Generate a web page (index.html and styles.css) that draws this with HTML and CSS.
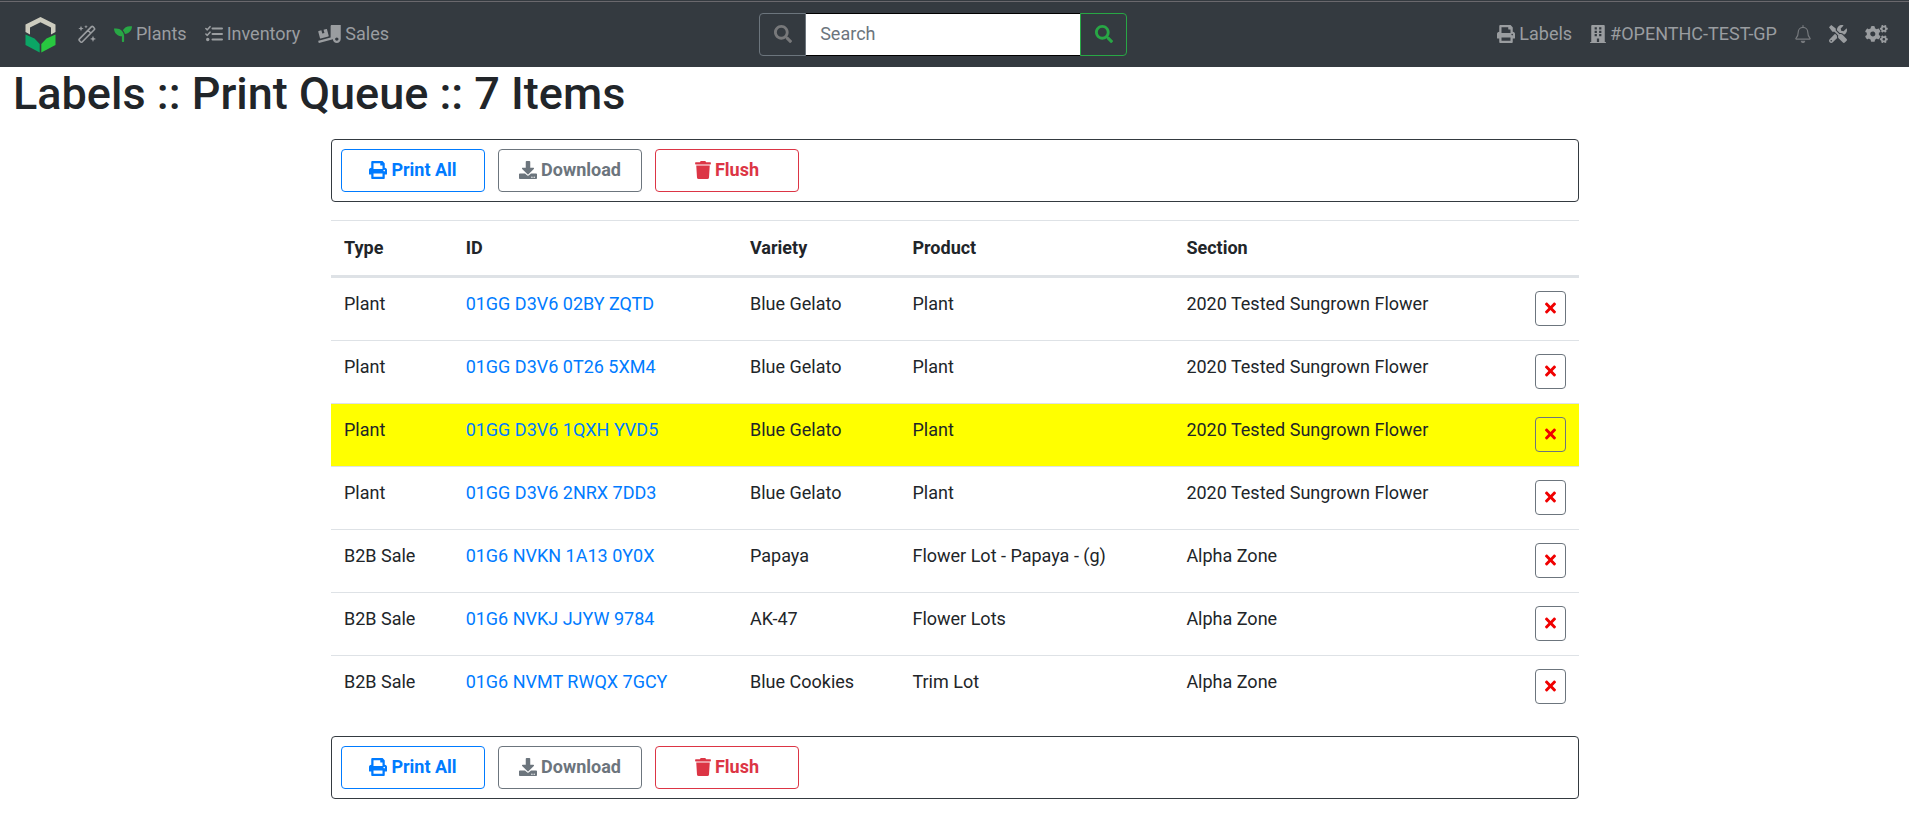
FILE: index.html
```
<!DOCTYPE html>
<html lang="en">
<head>
<meta charset="utf-8">
<meta name="viewport" content="width=device-width, initial-scale=1">
<title>Labels :: Print Queue</title>
<link rel="stylesheet" href="styles.css">
</head>
<body>
<svg class="sprite" aria-hidden="true">
  <symbol id="i-search" viewBox="0 0 512 512"><path d="M505 442.700L405.300 343c-4.500-4.500-10.600-7-17-7H372c27.600-35.300 44-79.700 44-128C416 93.100 322.900 0 208 0S0 93.100 0 208s93.100 208 208 208c48.300 0 92.700-16.400 128-44v16.300c0 6.400 2.500 12.500 7 17l99.700 99.700c9.400 9.400 24.600 9.400 33.900 0l28.300-28.300c9.400-9.400 9.400-24.600.1-34zM208 336c-70.700 0-128-57.200-128-128 0-70.700 57.200-128 128-128 70.700 0 128 57.200 128 128 0 70.700-57.200 128-128 128z"/></symbol>
  <symbol id="i-print" viewBox="0 0 512 512"><path d="M448 192V77.250c0-8.490-3.370-16.620-9.370-22.630L393.370 9.370c-6-6-14.140-9.370-22.630-9.370H96C78.330 0 64 14.330 64 32v160c-35.350 0-64 28.650-64 64v112c0 8.840 7.160 16 16 16h48v96c0 17.670 14.330 32 32 32h320c17.670 0 32-14.330 32-32v-96h48c8.840 0 16-7.160 16-16V256c0-35.350-28.650-64-64-64zm-64 256H128v-96h256v96zm0-224H128V64h192v48c0 8.840 7.160 16 16 16h48v96zm48 72c-13.250 0-24-10.750-24-24 0-13.260 10.750-24 24-24s24 10.740 24 24c0 13.250-10.750 24-24 24z"/></symbol>
  <symbol id="i-download" viewBox="0 0 512 512"><path d="M216 0h80c13.300 0 24 10.700 24 24v168h87.700c17.800 0 26.700 21.500 14.100 34.100L269.700 378.300c-7.500 7.500-19.800 7.500-27.300 0L90.100 226.100c-12.600-12.600-3.700-34.100 14.100-34.100H192V24c0-13.300 10.700-24 24-24zm296 376v112c0 13.300-10.700 24-24 24H24c-13.300 0-24-10.700-24-24V376c0-13.300 10.700-24 24-24h146.700l49 49c20.100 20.100 52.500 20.100 72.600 0l49-49H488c13.300 0 24 10.700 24 24zm-124 88c0-11-9-20-20-20s-20 9-20 20 9 20 20 20 20-9 20-20zm64 0c0-11-9-20-20-20s-20 9-20 20 9 20 20 20 20-9 20-20z"/></symbol>
  <symbol id="i-trash" viewBox="0 0 448 512"><path d="M432 32H312l-9.400-18.700A24 24 0 0 0 281.100 0H166.800a23.720 23.720 0 0 0-21.400 13.300L136 32H16A16 16 0 0 0 0 48v32a16 16 0 0 0 16 16h416a16 16 0 0 0 16-16V48a16 16 0 0 0-16-16zM53.200 467a48 48 0 0 0 47.900 45h245.800a48 48 0 0 0 47.900-45L416 128H32z"/></symbol>
  <symbol id="i-times" viewBox="0 0 352 512"><path d="M242.720 256l100.070-100.070c12.280-12.280 12.280-32.190 0-44.480l-22.240-22.240c-12.280-12.280-32.190-12.280-44.480 0L176 189.280 75.930 89.210c-12.280-12.280-32.190-12.280-44.480 0L9.210 111.450c-12.280 12.280-12.280 32.190 0 44.480L109.280 256 9.210 356.070c-12.280 12.280-12.280 32.190 0 44.480l22.240 22.240c12.280 12.280 32.200 12.280 44.480 0L176 322.720l100.070 100.070c12.280 12.280 32.200 12.280 44.480 0l22.240-22.240c12.280-12.280 12.280-32.190 0-44.480L242.720 256z"/></symbol>
  <symbol id="i-seedling" viewBox="0 0 512 512"><path d="M64 96H0c0 123.700 100.300 224 224 224v144c0 8.800 7.200 16 16 16h32c8.800 0 16-7.200 16-16V320C288 196.300 187.700 96 64 96zm384-64c-84.200 0-157.400 46.500-195.700 115.200 27.700 30.200 48.200 66.900 59 107.600C424 243.100 512 147.900 512 32h-64z"/></symbol>
  <symbol id="i-truck" viewBox="0 0 640 512"><path d="M50.200 375.600c2.300 8.500 11.100 13.600 19.600 11.300l216.400-58c8.500-2.300 13.600-11.100 11.300-19.600l-49.700-185.500c-2.300-8.500-11.100-13.600-19.600-11.300L151 133.300l24.800 92.700-61.800 16.500-24.800-92.700-77.300 20.700C3.400 172.800-1.700 181.600.6 190.100l49.600 185.500zM384 0c-17.700 0-32 14.300-32 32v323.600L5.900 450c-4.300 1.200-6.800 5.600-5.600 9.800l12.600 46.300c1.200 4.300 5.600 6.800 9.800 5.600l393.700-107.400C418.800 464.100 467.600 512 528 512c61.900 0 112-50.100 112-112V0H384zm144 448c-26.500 0-48-21.500-48-48s21.500-48 48-48 48 21.500 48 48-21.500 48-48 48z"/></symbol>
  <symbol id="i-tools" viewBox="0 0 512 512"><path d="M501.100 395.700L384 278.600c-23.100-23.100-57.600-27.600-85.400-13.900L192 158.100V96L64 0 0 64l96 128h62.100l106.600 106.600c-13.600 27.800-9.200 62.300 13.900 85.400l117.100 117.100c14.600 14.600 38.200 14.600 52.700 0l52.700-52.700c14.500-14.600 14.500-38.200 0-52.700zM331.700 225c28.300 0 54.900 11 74.900 31l19.400 19.400c15.800-6.900 30.800-16.500 43.800-29.500 37.100-37.100 49.700-89.300 37.900-136.700-2.200-9-13.500-12.100-20.100-5.500l-74.400 74.400-67.900-11.300L334 98.900l74.400-74.400c6.600-6.600 3.400-17.900-5.700-20.200-47.400-11.700-99.600.9-136.600 37.900-28.500 28.500-41.900 66.100-41.200 103.600l82.100 82.100c8.100-1.900 16.500-2.900 24.700-2.900zm-103.900 82l-56.700-56.700L18.700 402.800c-25 25-25 65.500 0 90.500s65.500 25 90.500 0l123.600-123.600c-7.600-19.900-9.900-41.600-5-62.700zM64 472c-13.200 0-24-10.800-24-24 0-13.300 10.700-24 24-24s24 10.700 24 24c0 13.200-10.700 24-24 24z"/></symbol>
  <symbol id="i-cogs" viewBox="0 0 640 512">
    <path id="small-cog" d="M512.100 191l-8.200 14.300c-3 5.300-9.400 7.500-15.100 5.400-11.800-4.400-22.600-10.700-32.100-18.600-4.600-3.800-5.800-10.500-2.800-15.700l8.200-14.300c-6.900-8-12.300-17.300-15.900-27.400h-16.500c-6 0-11.200-4.300-12.200-10.300-2-12-2.100-24.600 0-37.100 1-6 6.200-10.400 12.200-10.400h16.500c3.600-10.100 9-19.400 15.900-27.400l-8.200-14.300c-3-5.200-1.900-11.900 2.800-15.700 9.500-7.900 20.400-14.200 32.100-18.600 5.700-2.100 12.100.1 15.100 5.400l8.200 14.300c10.500-1.900 21.200-1.900 31.700 0L552 6.300c3-5.300 9.400-7.500 15.100-5.400 11.800 4.400 22.600 10.700 32.100 18.600 4.600 3.800 5.800 10.500 2.800 15.700l-8.200 14.300c6.900 8 12.300 17.300 15.900 27.400h16.500c6 0 11.200 4.300 12.200 10.300 2 12 2.100 24.600 0 37.100-1 6-6.200 10.400-12.200 10.400h-16.500c-3.600 10.100-9 19.400-15.900 27.400l8.200 14.300c3 5.200 1.900 11.900-2.800 15.700-9.500 7.900-20.400 14.200-32.100 18.600-5.700 2.100-12.100-.1-15.100-5.400l-8.200-14.300c-10.400 1.900-21.200 1.900-31.700 0zm-10.500-58.800c38.500 29.600 82.400-14.300 52.800-52.800-38.500-29.700-82.400 14.300-52.800 52.800z"/>
    <use href="#small-cog" y="301"/>
    <path d="M386.300 286.100l33.700 16.800c10.100 5.800 14.500 18.100 10.500 29.100-8.900 24.200-26.400 46.400-42.600 65.800-7.400 8.900-20.200 11.100-30.300 5.300l-29.100-16.800c-16 13.700-34.600 24.600-54.900 31.700v33.600c0 11.600-8.300 21.600-19.700 23.600-24.600 4.200-50.400 4.400-75.900 0-11.500-2-20-11.900-20-23.600V418c-20.300-7.200-38.900-18-54.900-31.700L74 403c-10 5.800-22.900 3.600-30.300-5.300-16.200-19.400-33.300-41.600-42.200-65.700-4-10.900.4-23.200 10.500-29.100l33.300-16.800c-3.900-20.900-3.900-42.400 0-63.400L12 205.800c-10.100-5.800-14.600-18.100-10.500-29 8.900-24.200 26-46.400 42.200-65.800 7.400-8.900 20.200-11.100 30.300-5.300l29.100 16.800c16-13.700 34.600-24.600 54.900-31.700V57.100c0-11.500 8.200-21.500 19.600-23.500 24.600-4.200 50.500-4.400 76-.1 11.500 2 20 11.900 20 23.600v33.600c20.300 7.200 38.900 18 54.900 31.700l29.100-16.800c10-5.800 22.900-3.600 30.300 5.300 16.200 19.400 33.200 41.600 42.100 65.800 4 10.900.1 23.200-10 29.100l-33.700 16.800c3.900 21 3.900 42.500 0 63.500zm-117.600 21.100c59.200-77-28.700-164.900-105.700-105.700-59.200 77 28.700 164.900 105.700 105.700z"/>
  </symbol>
  <symbol id="i-building" viewBox="0 0 448 512"><path fill-rule="evenodd" d="M436 480h-20V24c0-13-11-24-24-24H56C43 0 32 11 32 24v456H12c-7 0-12 5-12 12v20h448v-20c0-7-5-12-12-12zM128 64h64v64h-64zM256 64h64v64h-64zM128 160h64v64h-64zM256 160h64v64h-64zM128 256h64v64h-64zM256 256h64v64h-64zM192 384h64v96h-64z"/></symbol>
  <symbol id="i-bell" viewBox="0 0 448 512"><path fill="none" stroke="currentColor" stroke-width="34" stroke-linejoin="round" stroke-linecap="round" d="M224 20v46M224 68c-80 0-136 62-136 140 0 108-38 138-62 164-10 11-4 28 10 28h376c14 0 20-17 10-28-24-26-62-56-62-164 0-78-56-140-136-140z"/><path d="M160 446h128c0 36-29 66-64 66s-64-30-64-66z"/></symbol>
  <symbol id="i-tasks" viewBox="0 0 18 18"><g fill="none" stroke="currentColor" stroke-width="2" stroke-linecap="round" stroke-linejoin="round"><path d="M7.500 3.500H17M7.500 9H17M7.500 14.500H17"/><path stroke-width="1.600" d="M.9 3.500l1.400 1.300L5 1.700M.9 9l1.400 1.300L5 7.200"/></g><circle cx="2.700" cy="14.500" r="1.700"/></symbol>
  <symbol id="i-wand" viewBox="0 0 18 18"><g fill="none" stroke="currentColor" stroke-width="1.600" stroke-linejoin="round"><path d="M1.500 13.900L13.300 1.900c.6-.6 1.300-.6 1.900 0l1 1.100c.6.6.6 1.200 0 1.800L4.400 16.800c-.6.6-1.300.6-1.900 0l-1-1.100c-.6-.6-.6-1.200 0-1.800zM10 5.300l2.900 2.900"/></g><path d="M3 .8l.8 1.900 1.900.8-1.900.8L3 6.200l-.8-1.900L.3 3.500l1.900-.8zM15 10.800l.9 2.200 2.100.9-2.100.9L15 17l-.9-2.200-2.100-.9 2.100-.9zM8 .1l.6 1.200 1.200.5-1.200.5L8 3.500l-.6-1.200-1.200-.5 1.200-.5z"/></symbol>
</svg>

<nav class="navbar">
  <div class="nav-group">
    <a class="brand" href="#" aria-label="Home">
      <svg class="logo" viewBox="0 0 31 36" aria-hidden="true">
        <path fill="#cdccbf" d="M15.500 0L30.500 7.500V15L26 17.500V10.500L15.500 5.200 5 10.500V17.500L.5 15V7.500z"/>
        <path fill="#0ba565" d="M.5 17.500L9.500 21.500 14.700 27V35.500L.5 28z"/>
        <path fill="#28c840" d="M30.500 17.500L21.500 21.500 16.300 27V35.500L30.500 28z"/>
      </svg>
    </a>
    <a class="nav-link" href="#" aria-label="Wizard"><svg class="icon"><use href="#i-wand"/></svg></a>
    <a class="nav-link" href="#"><svg class="icon icon-green"><use href="#i-seedling"/></svg>Plants</a>
    <a class="nav-link" href="#"><svg class="icon"><use href="#i-tasks"/></svg>Inventory</a>
    <a class="nav-link" href="#"><svg class="icon icon-wide"><use href="#i-truck"/></svg>Sales</a>
  </div>
  <form class="search">
    <button class="search-btn search-mode" type="button" aria-label="Search options"><svg class="icon"><use href="#i-search"/></svg></button>
    <input class="search-input" type="text" placeholder="Search" aria-label="Search">
    <button class="search-btn search-go" type="button" aria-label="Go"><svg class="icon"><use href="#i-search"/></svg></button>
  </form>
  <div class="nav-group">
    <a class="nav-link" href="#"><svg class="icon"><use href="#i-print"/></svg>Labels</a>
    <a class="nav-link" href="#"><svg class="icon icon-narrow"><use href="#i-building"/></svg>#OPENTHC-TEST-GP</a>
    <a class="nav-link nav-dim" href="#" aria-label="Alerts"><svg class="icon icon-narrow"><use href="#i-bell"/></svg></a>
    <a class="nav-link" href="#" aria-label="Tools"><svg class="icon"><use href="#i-tools"/></svg></a>
    <a class="nav-link" href="#" aria-label="Settings"><svg class="icon icon-wide"><use href="#i-cogs"/></svg></a>
  </div>
</nav>

<main class="page">
  <h1 class="title">Labels :: Print Queue :: 7 Items</h1>
  <div class="queue">
    <div class="toolbar">
      <button class="btn btn-primary" type="button"><svg class="icon"><use href="#i-print"/></svg>Print All</button>
      <button class="btn btn-secondary" type="button"><svg class="icon"><use href="#i-download"/></svg>Download</button>
      <button class="btn btn-danger" type="button"><svg class="icon icon-narrow"><use href="#i-trash"/></svg>Flush</button>
    </div>
    <table class="table">
      <thead>
        <tr><th>Type</th><th>ID</th><th>Variety</th><th>Product</th><th>Section</th><th></th></tr>
      </thead>
      <tbody>
        <tr><td>Plant</td><td><a href="#">01GG D3V6 02BY ZQTD</a></td><td>Blue Gelato</td><td>Plant</td><td>2020 Tested Sungrown Flower</td><td class="actions"><button class="remove" type="button" aria-label="Remove"><svg class="icon-x"><use href="#i-times"/></svg></button></td></tr>
        <tr><td>Plant</td><td><a href="#">01GG D3V6 0T26 5XM4</a></td><td>Blue Gelato</td><td>Plant</td><td>2020 Tested Sungrown Flower</td><td class="actions"><button class="remove" type="button" aria-label="Remove"><svg class="icon-x"><use href="#i-times"/></svg></button></td></tr>
        <tr class="marked"><td>Plant</td><td><a href="#">01GG D3V6 1QXH YVD5</a></td><td>Blue Gelato</td><td>Plant</td><td>2020 Tested Sungrown Flower</td><td class="actions"><button class="remove" type="button" aria-label="Remove"><svg class="icon-x"><use href="#i-times"/></svg></button></td></tr>
        <tr><td>Plant</td><td><a href="#">01GG D3V6 2NRX 7DD3</a></td><td>Blue Gelato</td><td>Plant</td><td>2020 Tested Sungrown Flower</td><td class="actions"><button class="remove" type="button" aria-label="Remove"><svg class="icon-x"><use href="#i-times"/></svg></button></td></tr>
        <tr><td>B2B Sale</td><td><a href="#">01G6 NVKN 1A13 0Y0X</a></td><td>Papaya</td><td>Flower Lot - Papaya - (g)</td><td>Alpha Zone</td><td class="actions"><button class="remove" type="button" aria-label="Remove"><svg class="icon-x"><use href="#i-times"/></svg></button></td></tr>
        <tr><td>B2B Sale</td><td><a href="#">01G6 NVKJ JJYW 9784</a></td><td>AK-47</td><td>Flower Lots</td><td>Alpha Zone</td><td class="actions"><button class="remove" type="button" aria-label="Remove"><svg class="icon-x"><use href="#i-times"/></svg></button></td></tr>
        <tr><td>B2B Sale</td><td><a href="#">01G6 NVMT RWQX 7GCY</a></td><td>Blue Cookies</td><td>Trim Lot</td><td>Alpha Zone</td><td class="actions"><button class="remove" type="button" aria-label="Remove"><svg class="icon-x"><use href="#i-times"/></svg></button></td></tr>
      </tbody>
    </table>
    <div class="toolbar">
      <button class="btn btn-primary" type="button"><svg class="icon"><use href="#i-print"/></svg>Print All</button>
      <button class="btn btn-secondary" type="button"><svg class="icon"><use href="#i-download"/></svg>Download</button>
      <button class="btn btn-danger" type="button"><svg class="icon icon-narrow"><use href="#i-trash"/></svg>Flush</button>
    </div>
  </div>
</main>
</body>
</html>
```
FILE: styles.css
```
*, *::before, *::after { box-sizing: border-box; }

body {
  margin: 0;
  background: #fff;
  color: #212529;
  font-family: Roboto, "Liberation Sans", sans-serif;
  font-size: 18px;
  line-height: 27px;
}

a { color: #007bff; text-decoration: none; }
button, input { font: inherit; margin: 0; }
svg { fill: currentColor; flex: none; }

.sprite { position: absolute; width: 0; height: 0; }

.icon { width: 18px; height: 18px; }
.icon-narrow { width: 16px; }
.icon-wide { width: 23px; }
.icon-green { color: #28a745; }

/* Top bar */
.navbar {
  display: flex;
  align-items: center;
  justify-content: space-between;
  padding: 13px 12px 11px;
  background: #343a40;
  box-shadow: inset 0 1px #343a40, inset 0 2px #6a686d;
}
.nav-group { display: flex; align-items: center; }
.brand { display: flex; padding: 0 13px; }
.logo { width: 31px; height: 36px; }
.nav-link {
  display: flex;
  align-items: center;
  gap: 4px;
  padding: 0 9px 2px;
  color: #9a9da0;
}
.nav-dim { color: #76797d; }

.search { display: flex; }
.search-btn {
  display: flex;
  align-items: center;
  justify-content: center;
  width: 47px;
  height: 43px;
  padding: 0 0 2px;
  background: transparent;
  border: 1px solid;
}
.search-mode { color: #77787a; border-color: #6c757d; border-radius: 4px 0 0 4px; }
.search-go { color: #28a745; border-color: #28a745; border-radius: 0 4px 4px 0; }
.search-input {
  width: 274px;
  height: 43px;
  padding: 0 14px 2px;
  border: solid #000;
  border-width: 1px 0;
  border-radius: 0;
  background: #fff;
  color: #495057;
}
.search-input::placeholder { color: #6c757d; opacity: 1; }

/* Page */
.page { padding: 0 12px 18px 13px; }
.title {
  margin: 0 0 18px;
  font-size: 45px;
  font-weight: 500;
  line-height: 54px;
}
.queue { width: 67%; max-width: 1248px; margin: 0 auto; }

.toolbar {
  display: flex;
  gap: 13px;
  padding: 9px;
  border: 1px solid #343a40;
  border-radius: 4px;
}
.btn {
  display: flex;
  align-items: center;
  justify-content: center;
  gap: 4px;
  width: 144px;
  height: 43px;
  padding: 0 0 2px;
  background: transparent;
  border: 1px solid;
  border-radius: 4px;
  font-weight: 700;
}
.btn-primary { color: #007bff; border-color: #007bff; }
.btn-secondary { color: #6c757d; border-color: #6c757d; }
.btn-danger { color: #dc3545; border-color: #dc3545; }

/* Queue table */
.table {
  width: 100%;
  margin: 18px 0;
  border-spacing: 0;
}
.table th, .table td {
  padding: 13px 13px 14px;
  border-top: 1px solid #dee2e6;
  text-align: left;
  vertical-align: top;
}
.table th { border-bottom: 3px solid #dee2e6; font-weight: 700; }
.table td { padding-top: 12px; }
.table tbody tr:first-child td { border-top: 0; }
.marked { background: #ff0; }
.table .actions { padding-top: 13px; text-align: right; }
.remove {
  display: inline-flex;
  align-items: center;
  justify-content: center;
  width: 31px;
  height: 35px;
  padding: 0 0 2px;
  background: transparent;
  border: 1px solid #6c757d;
  border-radius: 4px;
  color: #f00000;
  vertical-align: top;
}
.icon-x { width: 11px; height: 16px; }
```
